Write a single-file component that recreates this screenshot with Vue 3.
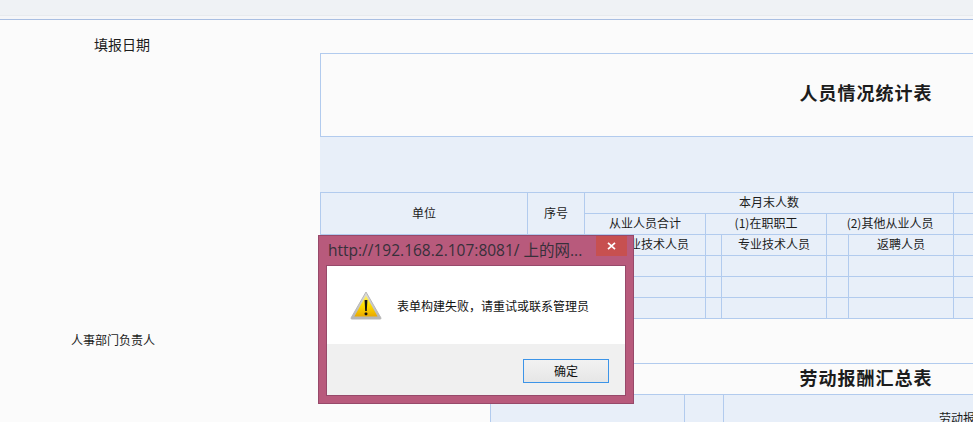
<script setup>
const bodyRows = [1, 2, 3]
const cells = [1, 2, 3, 4, 5, 6, 7, 8, 9]
</script>

<template>
  <div class="page">
    <header class="topbar"></header>
    <main class="content">
      <aside class="labels">
        <div class="label-date">填报日期</div>
        <div class="label-hr">人事部门负责人</div>
      </aside>
      <section class="sheets">
        <div class="title-box title-first">人员情况统计表</div>
        <div class="band"></div>
        <table class="grid grid-first">
          <colgroup>
            <col class="c1" /><col class="c2" /><col class="c3" /><col class="c3b" /><col class="c4" />
            <col class="c5" /><col class="c6" /><col class="c7" /><col class="c8" />
          </colgroup>
          <tbody>
            <tr>
              <td rowspan="2">单位</td>
              <td rowspan="2">序号</td>
              <td colspan="6">本月末人数</td>
              <td></td>
            </tr>
            <tr>
              <td colspan="2">从业人员合计</td>
              <td colspan="2">(1)在职职工</td>
              <td colspan="2">(2)其他从业人员</td>
              <td></td>
            </tr>
            <tr>
              <td></td>
              <td></td>
              <td></td>
              <td>专业技术人员</td>
              <td></td>
              <td>专业技术人员</td>
              <td></td>
              <td>返聘人员</td>
              <td></td>
            </tr>
            <tr v-for="r in bodyRows" :key="r">
              <td v-for="c in cells" :key="c"></td>
            </tr>
          </tbody>
        </table>
        <div class="second">
          <div class="title-box title-second">劳动报酬汇总表</div>
          <table class="grid grid-second">
            <colgroup>
              <col class="d1" /><col class="d2" /><col class="d3" />
            </colgroup>
            <tbody>
              <tr class="tall">
                <td></td>
                <td></td>
                <td class="wide-head">劳动报酬（元）</td>
              </tr>
            </tbody>
          </table>
        </div>
      </section>
    </main>

    <div class="dialog">
      <div class="dialog-title">
        <span class="dialog-caption">http://192.168.2.107:8081/ 上的网...</span>
        <button class="dialog-close" type="button" aria-label="关闭">
          <svg width="9" height="8" viewBox="0 0 9 8">
            <path d="M1 0.8 L8 7.2 M8 0.8 L1 7.2" stroke="#fff" stroke-width="1.7" fill="none" />
          </svg>
        </button>
      </div>
      <div class="dialog-inner">
        <div class="dialog-body">
          <svg class="warn" width="32" height="29" viewBox="0 0 32 29">
            <defs>
              <linearGradient id="warnFill" x1="0" y1="0" x2="0" y2="1">
                <stop offset="0" stop-color="#fff27a" />
                <stop offset="0.45" stop-color="#ffdf00" />
                <stop offset="1" stop-color="#e9a900" />
              </linearGradient>
              <linearGradient id="warnEdge" x1="0" y1="0" x2="0" y2="1">
                <stop offset="0" stop-color="#dcdcdc" />
                <stop offset="1" stop-color="#b4b4b4" />
              </linearGradient>
            </defs>
            <path d="M16 1 L31 27 Q31.4 28 30 28 L2 28 Q0.6 28 1 27 Z" fill="url(#warnEdge)" stroke="#b8b8b8" stroke-width="1" stroke-linejoin="round" />
            <path d="M16 4.5 L27.6 25.4 L4.4 25.4 Z" fill="url(#warnFill)" />
            <path d="M14.6 9 L17.4 9 L16.8 20 L15.2 20 Z" fill="#111" />
            <rect x="14.7" y="21.4" width="2.6" height="2.8" rx="0.8" fill="#111" />
          </svg>
          <span class="dialog-message">表单构建失败，请重试或联系管理员</span>
        </div>
        <div class="dialog-footer">
          <button class="dialog-ok" type="button">确定</button>
        </div>
      </div>
    </div>
  </div>
</template>

<style>
html, body { margin: 0; overflow: hidden; background: #fbfbfb; }
</style>

<style scoped>
.page {
  position: relative;
  width: 973px;
  height: 422px;
  overflow: hidden;
  background: #fbfbfb;
  color: #1c1c1c;
  font-family: "Noto Sans CJK SC", "Liberation Sans", sans-serif;
  font-size: 12px;
}
.topbar {
  box-sizing: border-box;
  height: 20px;
  background: linear-gradient(#eff2f5 0 15px, #e8ebee 15px 16px, #f5f6f8 16px);
  border-bottom: 1px solid #a9bfe2;
}
.content {
  display: flex;
  align-items: flex-start;
}
.labels {
  flex: 0 0 320px;
  display: flex;
  flex-direction: column;
}
.label-date {
  margin: 14px 0 0 94px;
  font-size: 14px;
  line-height: 20px;
}
.label-hr {
  margin: 278px 0 0 71px;
  line-height: 16px;
}
.sheets {
  flex: 0 0 1092px;
  width: 1092px;
  padding-top: 33px;
}
.title-box {
  box-sizing: border-box;
  display: flex;
  align-items: center;
  justify-content: center;
  font-size: 18px;
  font-weight: 700;
  letter-spacing: 1px;
  border: 1px solid #b2cbee;
}
.title-first {
  height: 84px;
  padding-bottom: 6px;
}
.band {
  height: 55px;
  background: #e8eff9;
}
.grid {
  border-collapse: collapse;
  table-layout: fixed;
  background: #e8eff9;
}
.grid td {
  height: 20px;
  padding: 0 0 2px;
  box-sizing: border-box;
  border: 1px solid #b2cbee;
  text-align: center;
  line-height: 16px;
  white-space: nowrap;
  overflow: hidden;
}
.grid-first { width: 1092px; }
.c1 { width: 207px; }
.c2 { width: 57px; }
.c3 { width: 16px; }
.c3b { width: 105px; }
.c4 { width: 16px; }
.c5 { width: 105px; }
.c6 { width: 22px; }
.c7 { width: 105px; }
.c8 { width: 459px; }
.grid-first td { height: 21px; }
.second {
  margin: 44px 0 0 170px;
  width: 752px;
}
.title-second {
  height: 31px;
  padding-bottom: 5px;
  border-bottom: 0;
  border-left: 0;
  border-right: 0;
}
.grid-second { width: 752px; }
.d1 { width: 194px; }
.d2 { width: 39px; }
.d3 { width: 519px; }
.grid-second .tall td { height: 46px; }
.grid-second .wide-head { padding: 0 4px 0 0; }

.dialog {
  position: absolute;
  left: 318px;
  top: 235px;
  box-sizing: border-box;
  width: 316px;
  height: 169px;
  display: flex;
  flex-direction: column;
  padding: 0 7px 7px;
  background: #b85a7c;
  border: 1px solid #97496a;
}
.dialog-title {
  flex: 0 0 29px;
  display: flex;
  align-items: flex-start;
  justify-content: space-between;
}
.dialog-caption {
  margin: 4px 0 0 2px;
  font-family: "Open Sans", "Noto Sans CJK SC", sans-serif;
  font-size: 15.5px;
  line-height: 21px;
  color: #37303a;
  white-space: nowrap;
}
.dialog-close {
  display: flex;
  align-items: center;
  justify-content: center;
  width: 31px;
  height: 20px;
  margin-right: -1px;
  padding: 0;
  border: 0;
  background: #c75050;
}
.dialog-inner {
  flex: 1;
  display: flex;
  flex-direction: column;
  border: 1px solid #97496a;
  background: #fff;
}
.dialog-body {
  flex: 1;
  display: flex;
  align-items: center;
  padding: 0 0 0 23px;
  gap: 15px;
}
.warn { flex: none; margin-top: 1px; }
.dialog-message {
  margin-top: 1px;
  font-size: 12px;
  line-height: 16px;
  color: #111;
  white-space: nowrap;
}
.dialog-footer {
  flex: 0 0 51px;
  display: flex;
  justify-content: flex-end;
  align-items: flex-start;
  padding: 15px 16px 0 0;
  box-sizing: border-box;
  background: #f0f0f0;
}
.dialog-ok {
  box-sizing: border-box;
  width: 86px;
  height: 24px;
  padding: 0;
  border: 1px solid #3c94e8;
  background: linear-gradient(#f2f2f2, #e6e6e6);
  color: #111;
  font-family: "Noto Sans CJK SC", sans-serif;
  font-size: 12px;
  line-height: 20px;
}
</style>
